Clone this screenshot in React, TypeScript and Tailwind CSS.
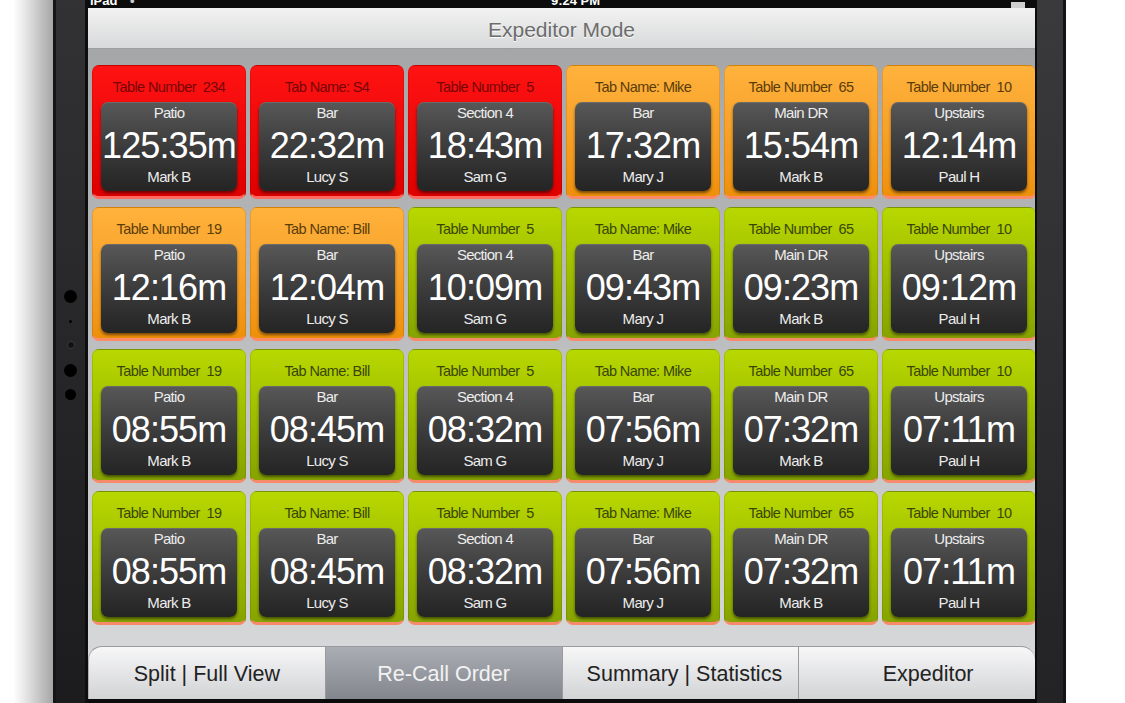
import React from "react";

type Level = "late" | "warn" | "ok";

interface Ticket {
  level: Level;
  title: string;
  area: string;
  time: string;
  server: string;
}

const CARD_BG: Record<Level, string> = {
  late: "bg-linear-to-b from-[#ff1212] to-[#df0000] border-b-[#ff6a5e]",
  warn: "bg-linear-to-b from-[#ffb23c] to-[#ee9008] border-b-[#ff8a66]",
  ok: "bg-linear-to-b from-[#b8d800] to-[#86a300] border-b-[#f88a6c]",
};

const TITLE_COLOR: Record<Level, string> = {
  late: "text-[#760606]",
  warn: "text-[#5a3c0a]",
  ok: "text-[#3a4606]",
};

const lower: Ticket[] = [
  { level: "ok", title: "Table Number  19", area: "Patio", time: "08:55m", server: "Mark B" },
  { level: "ok", title: "Tab Name: Bill", area: "Bar", time: "08:45m", server: "Lucy S" },
  { level: "ok", title: "Table Number  5", area: "Section 4", time: "08:32m", server: "Sam G" },
  { level: "ok", title: "Tab Name: Mike", area: "Bar", time: "07:56m", server: "Mary J" },
  { level: "ok", title: "Table Number  65", area: "Main DR", time: "07:32m", server: "Mark B" },
  { level: "ok", title: "Table Number  10", area: "Upstairs", time: "07:11m", server: "Paul H" },
];

const tickets: Ticket[] = [
  { level: "late", title: "Table Number  234", area: "Patio", time: "125:35m", server: "Mark B" },
  { level: "late", title: "Tab Name: S4", area: "Bar", time: "22:32m", server: "Lucy S" },
  { level: "late", title: "Table Number  5", area: "Section 4", time: "18:43m", server: "Sam G" },
  { level: "warn", title: "Tab Name: Mike", area: "Bar", time: "17:32m", server: "Mary J" },
  { level: "warn", title: "Table Number  65", area: "Main DR", time: "15:54m", server: "Mark B" },
  { level: "warn", title: "Table Number  10", area: "Upstairs", time: "12:14m", server: "Paul H" },
  { level: "warn", title: "Table Number  19", area: "Patio", time: "12:16m", server: "Mark B" },
  { level: "warn", title: "Tab Name: Bill", area: "Bar", time: "12:04m", server: "Lucy S" },
  { level: "ok", title: "Table Number  5", area: "Section 4", time: "10:09m", server: "Sam G" },
  { level: "ok", title: "Tab Name: Mike", area: "Bar", time: "09:43m", server: "Mary J" },
  { level: "ok", title: "Table Number  65", area: "Main DR", time: "09:23m", server: "Mark B" },
  { level: "ok", title: "Table Number  10", area: "Upstairs", time: "09:12m", server: "Paul H" },
  ...lower,
  ...lower,
];

const TABS = ["Split | Full View", "Re-Call Order", "Summary | Statistics", "Expeditor"];

function TicketCard({ t }: { t: Ticket }) {
  return (
    <div
      className={`h-[134px] rounded-[7px] border border-black/10 border-b-[3px] flex flex-col ${CARD_BG[t.level]}`}
    >
      <div
        className={`h-[36px] pt-[4px] leading-[34px] text-center text-[14.5px] tracking-[-0.6px] whitespace-pre ${TITLE_COLOR[t.level]}`}
      >
        {t.title}
      </div>
      <div className="mx-[8px] h-[89px] rounded-[7px] bg-linear-to-b from-[#585858] via-[#3c3c3c] to-[#242424] shadow-[0_2px_3px_rgba(0,0,0,0.5),inset_0_1px_0_rgba(255,255,255,0.12)] flex flex-col items-center text-white">
        <div className="h-[22px] leading-[22px] text-[15px] tracking-[-0.7px] text-[#ececec]">{t.area}</div>
        <div className="h-[43px] leading-[43px] text-[36px] tracking-[-0.9px]">{t.time}</div>
        <div className="h-[20px] leading-[20px] text-[15px] tracking-[-0.7px] text-[#ececec]">{t.server}</div>
      </div>
    </div>
  );
}

export default function App() {
  return (
    <div className="w-[1125px] h-[703px] overflow-hidden bg-white flex font-['Liberation_Sans',Arial,sans-serif]">
      {/* soft shadow left of the device */}
      <div className="w-[53px] shrink-0 bg-linear-to-r from-white from-[25%] via-[#e4e4e4] to-[#a6a6a6]" />

      {/* left bezel with camera / sensor dots */}
      <div className="w-[35px] shrink-0 border-l-[3px] border-[#161616] border-r-[3px] border-r-[#0e0e0e] bg-linear-to-b from-[#323234] to-[#1c1c1e] flex flex-col items-center pt-[290px]">
        <div className="w-[13px] h-[13px] rounded-full bg-black" />
        <div className="w-[3px] h-[3px] rounded-full bg-black mt-[17px]" />
        <div className="w-[8px] h-[8px] rounded-full bg-[#111] border border-[#3a3a3a] mt-[18px]" />
        <div className="w-[13px] h-[13px] rounded-full bg-black mt-[15px]" />
        <div className="w-[11px] h-[11px] rounded-full bg-black mt-[12px]" />
      </div>

      {/* screen */}
      <div className="w-[947px] shrink-0 h-[703px] bg-[#0c0c0c] flex flex-col">
        <div className="h-[8px] overflow-hidden bg-[#0c0c0c] flex items-end text-white text-[13px] leading-[15px] font-bold px-[2px]">
          <span className="w-[40px]">iPad</span>
          <span className="w-[10px] text-[#ccc]">•</span>
          <span className="flex-1 text-center">9:24 PM</span>
          <span className="w-[14px] h-[6px] bg-[#d0d0d0] mr-[8px]" />
        </div>

        <div className="h-[41px] pt-[3px] bg-linear-to-b from-[#f2f2f2] to-[#d8d9da] border-b border-[#9c9ea0] flex items-center justify-center">
          <span className="text-[21px] text-[#6c6c6c] [text-shadow:0_1px_0_#fff]">Expeditor Mode</span>
        </div>

        <div className="h-[597px] overflow-hidden bg-linear-to-b from-[#a4a6a8] to-[#d6d7d8] pt-[16px] pl-[4px]">
          <div className="grid grid-cols-[repeat(6,154px)] gap-x-[4px] gap-y-[8px]">
            {tickets.map((t, i) => (
              <TicketCard key={i} t={t} />
            ))}
          </div>
        </div>

        <div className="h-[53px] bg-[#d6d7d8] grid grid-cols-4">
          {TABS.map((label, i) => {
            const active = i === 1;
            return (
              <div
                key={label}
                className={`flex items-center justify-center pt-[3px] border-t border-[#9a9b9d] text-[21.5px] whitespace-nowrap ${
                  i > 0 ? "border-l border-l-[#9a9b9d]" : ""
                } ${i === 0 ? "rounded-tl-[14px] border-l border-l-[#b0b0b0]" : ""} ${
                  i === 2 ? "pl-[8px]" : ""
                } ${i === 3 ? "rounded-tr-[14px] pl-[22px]" : ""} ${
                  active
                    ? "bg-linear-to-b from-[#aaaeb4] to-[#83878d] text-[#f2f2f2]"
                    : "bg-linear-to-b from-[#f7f7f8] to-[#d2d3d5] text-[#222]"
                }`}
              >
                {label}
              </div>
            );
          })}
        </div>
      </div>

      {/* right bezel */}
      <div className="w-[31px] shrink-0 border-l-[2px] border-[#0c0c0c] border-r-[3px] border-r-[#141414] bg-linear-to-b from-[#3a3a3d] to-[#232325]" />

      <div className="flex-1 bg-white" />
    </div>
  );
}
